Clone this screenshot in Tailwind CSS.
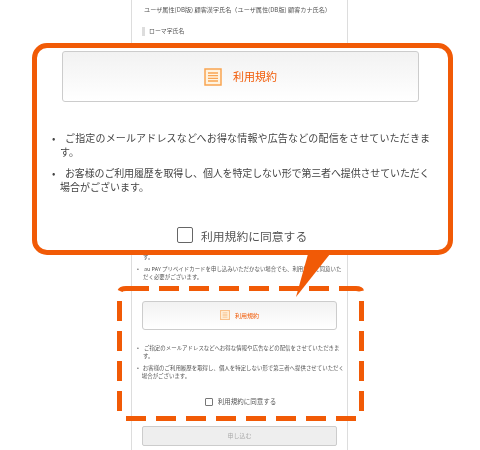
<!DOCTYPE html>
<html lang="ja">
<head>
<meta charset="utf-8">
<script src="https://cdn.jsdelivr.net/npm/@tailwindcss/browser@4"></script>
</head>
<body class="bg-white">
<div class="relative w-[480px] h-[450px] overflow-hidden bg-white text-[#555] blur-[0.35px] font-['Noto_Sans_CJK_JP','Noto_Sans',sans-serif]">
  <!-- page column -->
  <div class="ml-[131px] w-[217px] h-[450px] border-x border-[#ddd] pl-[10px] pr-[3px] text-[6px]">
    <p class="pt-[5px] pl-[2px] leading-[9px] whitespace-nowrap text-[6.15px]">ユーザ属性(DB版) 顧客漢字氏名（ユーザ属性(DB版) 顧客カナ氏名）</p>
    <div class="mt-[13px] flex items-center h-[9px] gap-[5px] whitespace-nowrap text-[5.9px]"><span class="w-[3px] h-[9px] bg-[#ddd]"></span><span class="-ml-[1px]">ローマ字氏名</span></div>
    <div class="h-[217px]"></div>
    <ul class="leading-[8.5px] text-[5.45px] whitespace-nowrap">
      <li class="pl-[1px]">す。</li>
      <li class="flex mt-[3px] -ml-[5px]"><span class="w-[6px]">•</span><span class="indent-[1px]">au PAY プリペイドカードを申し込みいただかない場合でも、利用規約に同意いた<br>だく必要がございます。</span></li>
    </ul>
    <div class="mt-[19px] w-[195px] h-[29px] rounded-[3px] border border-[#ccc] bg-gradient-to-b from-[#f2f2f2] to-white flex items-center justify-center gap-[5px] text-[#f15a06] text-[6px]">
      <svg class="w-[10px] h-[10px]" viewBox="0 0 18 18"><rect x="1" y="1" width="16" height="16" fill="#fff3e0" stroke="#f9c08a" stroke-width="2"/><path d="M4.500 5h9M4.500 7.700h9M4.500 10.300h9M4.500 13h9" stroke="#f9c08a" stroke-width="1.500"/></svg>
      <span>利用規約</span>
    </div>
    <ul class="mt-[14px] leading-[8.5px] text-[5.45px] whitespace-nowrap">
      <li class="flex -ml-[5px]"><span class="w-[6px]">•</span><span class="indent-[1px]">ご指定のメールアドレスなどへお得な情報や広告などの配信をさせていただきま<br>す。</span></li>
      <li class="flex mt-[3px] -ml-[5px]"><span class="w-[6px]">•</span><span class="indent-[1px]">お客様のご利用履歴を取得し、個人を特定しない形で第三者へ提供させていただく<br>場合がございます。</span></li>
    </ul>
    <div class="mt-[17px] pl-[2px] w-[195px] flex items-center justify-center gap-[5px] h-[9px] text-[6.5px] whitespace-nowrap">
      <span class="w-[8px] h-[8px] rounded-[1px] border border-[#777] bg-white"></span>利用規約に同意する
    </div>
    <div class="mt-[19px] w-[195px] h-[20px] rounded-[2px] border border-[#ccc] bg-[#eee] flex items-center justify-center text-[#aaa] text-[6px]">申し込む</div>
  </div>

  <!-- dashed highlight -->
  <svg class="absolute left-0 top-0 w-[480px] h-[450px] pointer-events-none" viewBox="0 0 480 450" fill="none" stroke="#f15a06" stroke-width="5">
    <path d="M120 291 Q121 288.500 126 288.500 H149" />
    <path d="M159 288.500 H339" stroke-dasharray="20 10"/>
    <path d="M339 288.500 H356 Q361 288.500 361.500 291"/>
    <path d="M119.500 301 V411" stroke-dasharray="20 10"/>
    <path d="M361.500 301 V411" stroke-dasharray="20 10"/>
    <path d="M126 418.500 H356" stroke-dasharray="20 10"/>
    <path d="M308 254 L330 254 L296 297 Z" fill="#f15a06" stroke="none"/>
  </svg>

  <!-- zoom callout -->
  <div class="absolute left-[32px] top-[43px] w-[421px] h-[212px] rounded-[15px] border-[5px] border-[#f15a06] bg-white pt-[3px] pl-[25px] pr-[29px] overflow-hidden">
    <div class="h-[51px] rounded-[3px] border border-[#ccc] bg-gradient-to-b from-[#f2f2f2] to-white flex items-center justify-center gap-[11px] text-[#f15a06] text-[11px]">
      <svg class="w-[18px] h-[18px]" viewBox="0 0 18 18"><rect x="1" y="1" width="16" height="16" fill="#fff3e0" stroke="#f9a552" stroke-width="1.500"/><path d="M4 5h10M4 7.700h10M4 10.300h10M4 13h10" stroke="#f9a552" stroke-width="1.300"/></svg>
      <span>利用規約</span>
    </div>
    <ul class="mt-[29px] -ml-[10px] text-[10px] leading-[14px] whitespace-nowrap text-[#444]">
      <li class="flex"><span class="w-[8px] shrink-0">•</span><span class="indent-[5px]"><span class="tracking-[0.16px]">ご指定のメールアドレスなどへお得な情報や広告などの配信をさせていただきま</span><br>す。</span></li>
      <li class="flex mt-[7px]"><span class="w-[8px] shrink-0">•</span><span class="indent-[5px]"><span class="tracking-[-0.15px]">お客様のご利用履歴を取得し、個人を特定しない形で第三者へ提供させていただく</span><br>場合がございます。</span></li>
    </ul>
    <div class="mt-[31px] pl-[115px] flex items-center gap-[8px] text-[11.8px] leading-[16px] whitespace-nowrap">
      <span class="w-[16px] h-[16px] rounded-[2px] border border-[#666] bg-white"></span><span class="pt-[3px]">利用規約に同意する</span>
    </div>
  </div>
</div>
</body>
</html>
